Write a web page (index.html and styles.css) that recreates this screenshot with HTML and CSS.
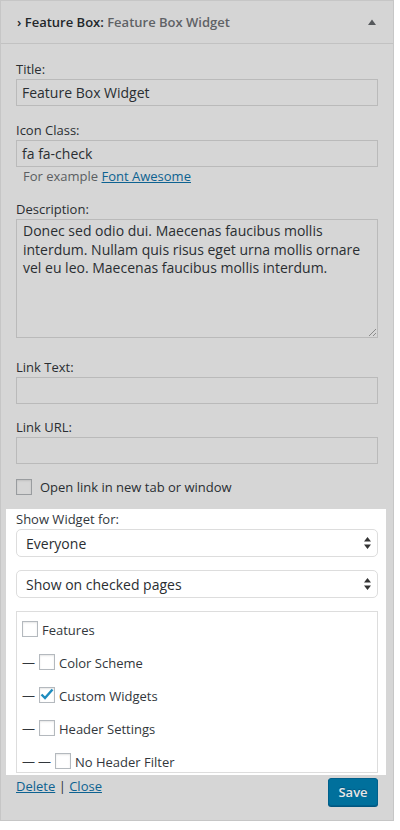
FILE: index.html
```html
<!DOCTYPE html>
<html>
<head>
<meta charset="utf-8">
<title>Feature Box Widget</title>
<link rel="stylesheet" href="styles.css">
</head>
<body>
<div class="widget">
  <div class="widget-top">
    <div class="widget-title"><span class="chev">›</span> Feature Box: <span class="in-title">Feature Box Widget</span></div>
    <svg class="toggle" width="8" height="6" viewBox="0 0 8 6"><path d="M0 6 L4 0.5 L8 6 Z" fill="#56595c"/></svg>
  </div>
  <div class="widget-inside">
    <div class="field">
      <div class="label">Title:</div>
      <div class="input">Feature Box Widget</div>
    </div>
    <div class="field">
      <div class="label">Icon Class:</div>
      <div class="input">fa fa-check</div>
      <div class="help">For example <a href="#" class="link">Font Awesome</a></div>
    </div>
    <div class="field field-desc">
      <div class="label">Description:</div>
      <div class="textarea">Donec sed odio dui. Maecenas faucibus mollis interdum. Nullam quis risus eget urna mollis ornare vel eu leo. Maecenas faucibus mollis interdum.
        <svg class="grip" width="8" height="8" viewBox="0 0 8 8"><path d="M1 8 L8 1 M5 8 L8 5" stroke="#8a8a8a" stroke-width="1"/></svg>
      </div>
    </div>
    <div class="field field-linktext">
      <div class="label">Link Text:</div>
      <div class="input"></div>
    </div>
    <div class="field">
      <div class="label">Link URL:</div>
      <div class="input"></div>
    </div>
    <div class="check-row">
      <span class="cb cb-dim"></span>
      <span>Open link in new tab or window</span>
    </div>

    <div class="visibility">
      <div class="label">Show Widget for:</div>
      <div class="select">
        <span>Everyone</span>
        <svg width="7" height="12" viewBox="0 0 7 12"><path d="M0 4.5 L3.5 0 L7 4.5 Z M0 7.5 L3.5 12 L7 7.5 Z" fill="#333"/></svg>
      </div>
      <div class="select select-2">
        <span>Show on checked pages</span>
        <svg width="7" height="12" viewBox="0 0 7 12"><path d="M0 4.5 L3.5 0 L7 4.5 Z M0 7.5 L3.5 12 L7 7.5 Z" fill="#333"/></svg>
      </div>
      <div class="checklist">
        <ul>
          <li><span class="cb"></span><span class="item">Features</span></li>
          <li><span class="dash">—</span><span class="cb"></span><span class="item">Color Scheme</span></li>
          <li><span class="dash">—</span><span class="cb cb-on"><svg width="16" height="16" viewBox="0 0 16 16"><path d="M2.5 7.5 L6 11 L13.5 2.5" fill="none" stroke="#1e8cbe" stroke-width="2.4"/></svg></span><span class="item">Custom Widgets</span></li>
          <li><span class="dash">—</span><span class="cb"></span><span class="item">Header Settings</span></li>
          <li><span class="dash">—</span><span class="dash">—</span><span class="cb"></span><span class="item">No Header Filter</span></li>
        </ul>
      </div>
    </div>

    <div class="actions">
      <div class="links"><a href="#" class="link">Delete</a> | <a href="#" class="link">Close</a></div>
      <button class="save">Save</button>
    </div>
  </div>
</div>
</body>
</html>
```
FILE: styles.css
```css
html, body {
  margin: 0;
  padding: 0;
  background: #ffffff;
}
body {
  font-family: "Open Sans", "Liberation Sans", sans-serif;
  font-size: 13px;
  color: #2a2e32;
}
.widget {
  width: 394px;
  box-sizing: border-box;
  border: 1px solid #c6c6c6;
  background: #d6d6d6;
}
.widget-top {
  height: 42px;
  border-bottom: 1px solid #c2c2c2;
  display: flex;
  align-items: center;
  justify-content: space-between;
  padding: 0 17px 0 16px;
  background: #d5d5d5;
}
.widget-title {
  font-size: 13px;
  font-weight: 600;
  color: #23272b;
  white-space: pre;
}
.in-title {
  color: #5f6266;
}
.toggle {
  display: block;
  margin-top: -1px;
}
.widget-inside {
  padding: 16px 15px 14px;
}
.label {
  line-height: 18px;
  margin-bottom: 1px;
}
.field {
  margin-bottom: 15px;
}
.field-desc {
  margin-bottom: 20px;
}
.field-linktext {
  margin-bottom: 14px;
}
.input {
  height: 27px;
  box-sizing: border-box;
  border: 1px solid #bababa;
  padding: 0 5px;
  line-height: 25px;
  font-size: 14px;
  color: #2a2e32;
}
.help {
  line-height: 18px;
  padding-left: 7px;
  color: #5b5e61;
}
.link {
  color: #0d6291;
  text-decoration: underline;
}
.textarea {
  position: relative;
  height: 119px;
  box-sizing: border-box;
  border: 1px solid #bababa;
  padding: 2px 6px;
  font-size: 14px;
  line-height: 18.5px;
}
.grip {
  position: absolute;
  right: 1px;
  bottom: 1px;
}
.check-row {
  display: flex;
  align-items: center;
  height: 16px;
  margin-bottom: 14px;
}
.check-row .cb {
  margin-right: 8px;
}
.cb {
  display: inline-block;
  width: 16px;
  height: 16px;
  box-sizing: border-box;
  border: 1px solid #b4b9be;
  background: #fff;
  box-shadow: inset 0 1px 2px rgba(0,0,0,0.1);
  flex: none;
  margin-right: 4px;
  position: relative;
}
.cb svg {
  position: absolute;
  left: -1px;
  top: -1px;
}
.cb-dim {
  border-color: #999c9f;
  background: #d6d6d6;
}
.visibility {
  background: #ffffff;
  margin: 0 -8px 0 -10px;
  padding: 1px 8px 2px 10px;
  color: #32373c;
}
.select {
  height: 28px;
  box-sizing: border-box;
  border: 1px solid #dddddd;
  border-radius: 5px;
  display: flex;
  align-items: center;
  justify-content: space-between;
  padding: 0 6px 0 9px;
  font-size: 14px;
  color: #2a2e32;
}
.select-2 {
  margin-top: 13px;
}
.checklist {
  margin-top: 13px;
  height: 162px;
  box-sizing: border-box;
  border: 1px solid #dddddd;
  overflow: hidden;
}
.checklist ul {
  list-style: none;
  margin: 0;
  padding: 9px 0 0 5px;
}
.checklist li {
  display: flex;
  align-items: center;
  height: 16px;
  margin-bottom: 17px;
  line-height: 18px;
}
.item {
  padding-top: 2px;
}
.dash {
  display: inline-block;
  width: 16px;
  flex: none;
}
.dash + .cb {
  margin-left: 1px;
}
.actions {
  display: flex;
  justify-content: space-between;
  align-items: flex-start;
  margin-top: 2px;
}
.links {
  line-height: 18px;
  color: #2a2e32;
}
.save {
  margin-top: 1px;
  height: 28px;
  width: 50px;
  box-sizing: border-box;
  padding: 0;
  border: 1px solid #00608c;
  border-radius: 3px;
  background: #00709c;
  box-shadow: 0 1px 0 #005680;
  color: #e8e8e8;
  font-family: "Open Sans", "Liberation Sans", sans-serif;
  font-size: 13px;
  font-weight: 600;
  text-shadow: 0 -1px 1px #005680;
}
```
